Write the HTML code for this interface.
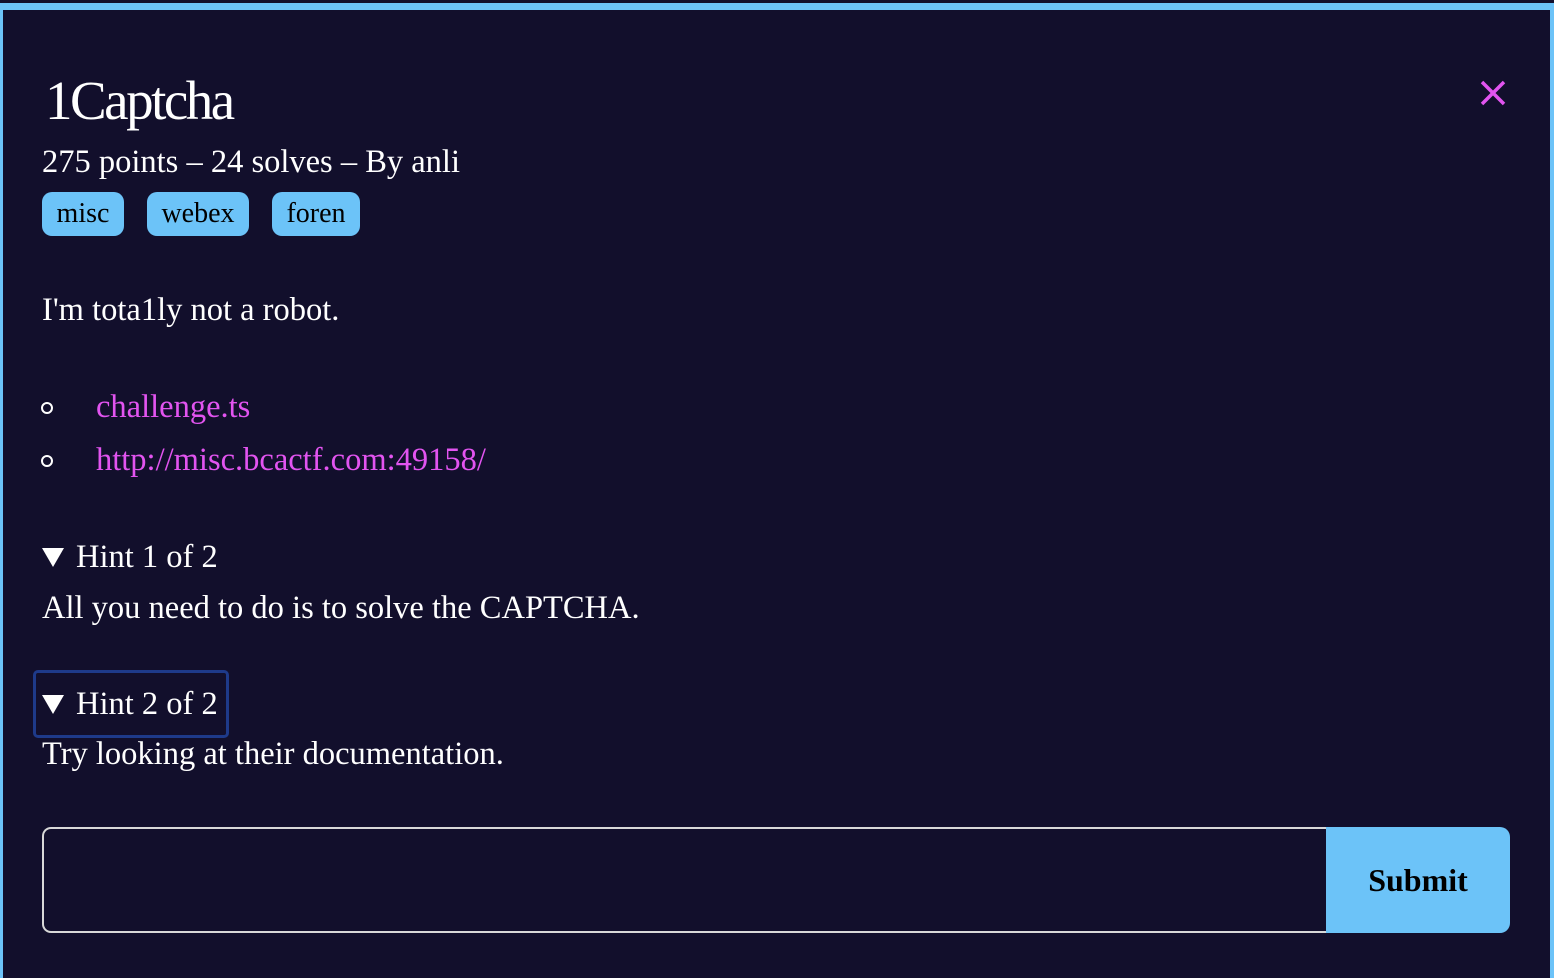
<!DOCTYPE html>
<html><head><meta charset="utf-8"><style>
html,body{margin:0;padding:0;width:1554px;height:972px;overflow:hidden;background:#120f2c;font-family:"Liberation Serif",serif;color:#fff}
.frame{position:absolute;left:0;top:3px;width:1554px;height:975px;border-left:3px solid #6cc3f8;border-top:7px solid #6cc3f8;border-right:4px solid #6cc3f8;box-sizing:border-box;background:#120f2c}
.top{position:absolute;left:0;top:0;width:1554px;height:3px;background:#120f2c}
.a{position:absolute;white-space:nowrap}
h1{position:absolute;left:45px;top:71px;margin:0;font-weight:normal;font-size:55px;letter-spacing:-2.5px;line-height:60px}
.meta{left:42px;top:144px;font-size:32.5px}
.tag{position:absolute;top:192px;height:44px;background:#6cc3f8;color:#000;border-radius:10px;font-size:28px;line-height:44px;text-align:center}
.t{font-size:32.5px}
.link{color:#e254f0;font-size:32.5px}
.dot{position:absolute;left:41px;width:8px;height:8px;border:2px solid #fff;border-radius:50%}
.x{position:absolute;left:1480px;top:80px}
.hint2box{position:absolute;left:33px;top:670px;width:190px;height:62px;border:3px solid #1e3a8a;border-radius:5px}
.input{position:absolute;left:42px;top:827px;width:1284px;height:106px;border:2px solid #d8d8d8;border-right:none;border-radius:9px 0 0 9px;box-sizing:border-box}
.btn{position:absolute;left:1326px;top:827px;width:184px;height:106px;background:#6cc3f8;border-radius:0 10px 10px 0;color:#000;font-weight:bold;font-size:32px;line-height:106px;text-align:center}
.tri{position:absolute;left:0;top:9px;width:0;height:0;border-left:11px solid transparent;border-right:11px solid transparent;border-top:19px solid #fff}
.h{padding-left:34px}
</style></head><body>
<div class="top"></div>
<div class="frame"></div>
<h1>1Captcha</h1>
<div class="a meta">275 points – 24 solves – By anli</div>
<div class="tag" style="left:42px;width:82px">misc</div>
<div class="tag" style="left:147px;width:102px">webex</div>
<div class="tag" style="left:272px;width:88px">foren</div>
<svg class="x" width="26" height="26" viewBox="0 0 26 26"><path d="M2 2L24 24M24 2L2 24" stroke="#e254f0" stroke-width="3.5"/></svg>
<div class="a t" style="left:42px;top:292px">I'm tota1ly not a robot.</div>
<div class="dot" style="top:402px"></div>
<div class="a link" style="left:96px;top:389px">challenge.ts</div>
<div class="dot" style="top:455px"></div>
<div class="a link" style="left:96px;top:442px">http://misc.bcactf.com:49158/</div>
<div class="a t h" style="left:42px;top:539px"><span class="tri"></span>Hint 1 of 2</div>
<div class="a t" style="left:42px;top:590px">All you need to do is to solve the CAPTCHA.</div>
<div class="hint2box"></div>
<div class="a t h" style="left:42px;top:686px"><span class="tri"></span>Hint 2 of 2</div>
<div class="a t" style="left:42px;top:736px">Try looking at their documentation.</div>
<div class="input"></div>
<div class="btn">Submit</div>
</body></html>
